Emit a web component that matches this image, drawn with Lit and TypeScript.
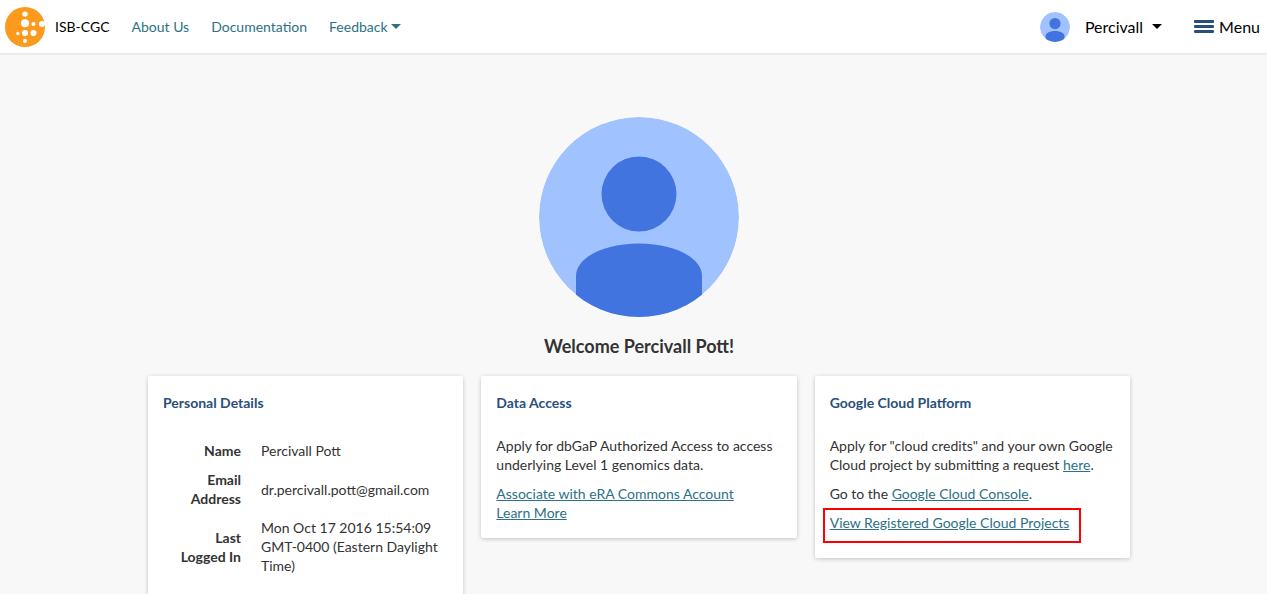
import { LitElement, html, css, svg } from "lit";
import { customElement, property } from "lit/decorators.js";

@customElement("user-avatar")
class UserAvatar extends LitElement {
  static styles = css`
    :host { display: block; }
    .picture { display: block; width: 100%; height: 100%; border-radius: 50%; }
  `;
  render() {
    return html`<svg class="picture" viewBox="0 0 200 200" aria-hidden="true">
      <circle cx="100" cy="100" r="100" fill="#a0c2ff" />
      <circle cx="100" cy="77" r="37.5" fill="#4274e0" />
      <path d="M37 200V159C37 141 64 126.500 100 126.500S163 141 163 159V200Z" fill="#4274e0" />
    </svg>`;
  }
}

@customElement("info-card")
class InfoCard extends LitElement {
  @property() heading = "";
  static styles = css`
    :host {
      display: block;
      padding: 17px 15px 16px;
      background: #fff;
      border-radius: 2px;
      box-shadow: 0 1px 4px rgba(0, 0, 0, 0.22);
    }
    .title { margin: 0 0 24px; font-size: 14px; line-height: 19px; font-weight: 700; color: #2a4f7a; }
  `;
  render() {
    return html`<h2 class="title">${this.heading}</h2><slot></slot>`;
  }
}

const caret = svg`<path d="M0 0H10L5 5Z" fill="currentColor" />`;

const logoDots = [
  [59, 21, 8], [59, 48, 12], [84, 50, 6], [109, 50, 9],
  [38, 78, 5], [59, 77, 9], [84, 77, 9], [59, 100, 6],
];

@customElement("app-root")
class AppRoot extends LitElement {
  static styles = css`
    :host {
      display: block;
      min-height: 100vh;
      background: #f8f8f8;
      color: #333;
      font-family: Lato, "Open Sans", sans-serif;
      font-size: 14px;
      line-height: 19px;
    }
    a { color: #2c7186; }
    button {
      display: flex;
      align-items: center;
      padding: 0;
      border: 0;
      background: none;
      color: #000;
      font: inherit;
      cursor: pointer;
    }
    .bar {
      display: flex;
      align-items: center;
      justify-content: space-between;
      height: 53px;
      padding: 0 7px 0 5px;
      background: #fff;
      border-bottom: 2px solid #ebebeb;
    }
    .nav, .brand, .account { display: flex; align-items: center; }
    .nav { gap: 22px; }
    .nav a { text-decoration: none; }
    .nav .brand { gap: 10px; color: #000; }
    .logo { width: 40px; height: 40px; }
    .feedback { gap: 3px; color: #2c7186; }
    .nav .feedback { color: #2c7186; }
    .caret { width: 10px; height: 5px; }
    .account { font-size: 16px; line-height: 20px; }
    .mini { width: 30px; height: 30px; margin-right: 15px; }
    .user { gap: 9px; margin-right: 32px; }
    .menu { gap: 5px; }
    .lines { width: 20px; height: 13px; }
    .page {
      display: flex;
      flex-direction: column;
      align-items: center;
      padding: 62px 0 20px 11px;
    }
    .portrait { width: 200px; height: 200px; }
    .welcome { margin: 17px 0 18px; font-size: 18px; line-height: 24px; font-weight: 700; }
    .cards {
      display: grid;
      grid-template-columns: repeat(3, 1fr);
      gap: 18px;
      align-items: start;
      width: 100%;
      max-width: 982px;
    }
    p { margin: 0 0 10px; }
    .links { display: flex; flex-direction: column; align-items: flex-start; }
    .details { border-collapse: collapse; }
    .details th, .details td { padding: 5px 0; vertical-align: middle; }
    .details th { width: 68px; padding-left: 10px; text-align: right; }
    .details td { padding-left: 20px; text-align: left; }
    .marked { position: relative; display: inline-block; }
    .marked::after {
      content: "";
      position: absolute;
      inset: -5px -12px -11px -7px;
      border: 2px solid #f00;
      pointer-events: none;
    }
  `;

  render() {
    return html`
      <header class="bar">
        <nav class="nav">
          <a class="brand" href="#home">
            <svg class="logo" viewBox="0 0 118 118" aria-hidden="true">
              <circle cx="59" cy="59" r="59" fill="#fb9a1c" />
              ${logoDots.map(([x, y, r]) => svg`<circle cx=${x} cy=${y} r=${r} fill="#fff" />`)}
            </svg>
            ISB-CGC
          </a>
          <a href="#about">About Us</a>
          <a href="#docs">Documentation</a>
          <button class="feedback">Feedback<svg class="caret" viewBox="0 0 10 5">${caret}</svg></button>
        </nav>
        <div class="account">
          <user-avatar class="mini"></user-avatar>
          <button class="user">Percivall<svg class="caret" viewBox="0 0 10 5">${caret}</svg></button>
          <button class="menu">
            <svg class="lines" viewBox="0 0 20 13" fill="#27507a">
              <rect width="20" height="3" rx="1" /><rect y="5" width="20" height="3" rx="1" /><rect y="10" width="20" height="3" rx="1" />
            </svg>Menu
          </button>
        </div>
      </header>
      <main class="page">
        <user-avatar class="portrait"></user-avatar>
        <h1 class="welcome">Welcome Percivall Pott!</h1>
        <section class="cards">
          <info-card heading="Personal Details">
            <table class="details">
              <tr><th scope="row">Name</th><td>Percivall Pott</td></tr>
              <tr><th scope="row">Email Address</th><td>dr.percivall.pott@gmail.com</td></tr>
              <tr><th scope="row">Last Logged In</th><td>Mon Oct 17 2016 15:54:09 GMT-0400 (Eastern Daylight Time)</td></tr>
            </table>
          </info-card>
          <info-card heading="Data Access">
            <p>Apply for dbGaP Authorized Access to access underlying Level 1 genomics data.</p>
            <div class="links">
              <a href="#era">Associate with eRA Commons Account</a>
              <a href="#learn">Learn More</a>
            </div>
          </info-card>
          <info-card heading="Google Cloud Platform">
            <p>Apply for "cloud credits" and your own Google Cloud project by submitting a request <a href="#request">here</a>.</p>
            <p>Go to the <a href="#console">Google Cloud Console</a>.</p>
            <p><a class="marked" href="#projects">View Registered Google Cloud Projects</a></p>
          </info-card>
        </section>
      </main>
    `;
  }
}
